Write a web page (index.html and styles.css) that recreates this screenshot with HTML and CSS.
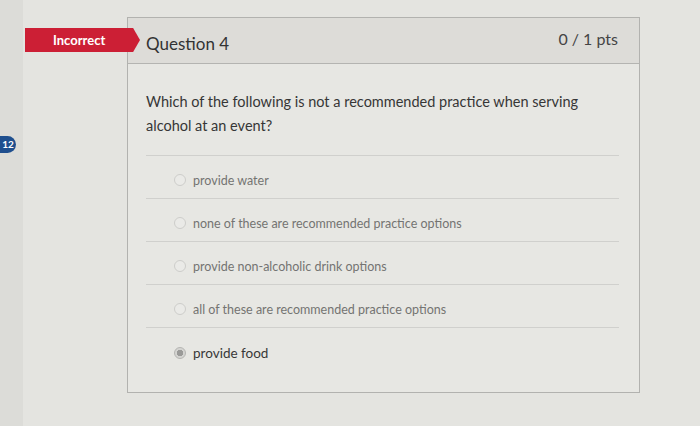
FILE: index.html
```html
<!DOCTYPE html>
<html>
<head>
<meta charset="utf-8">
<link rel="stylesheet" href="styles.css">
</head>
<body>
<div class="page">
  <div class="rail">
    <span class="qnum">12</span>
  </div>
  <div class="main">
    <div class="card">
      <div class="badge">Incorrect</div>
      <div class="card-header">
        <span class="qtitle">Question 4</span>
        <span class="pts">0 / 1 pts</span>
      </div>
      <div class="card-body">
        <div class="qtext-wrap">
          <p class="qtext">Which of the following is not a recommended practice when serving alcohol at an event?</p>
        </div>
        <ul class="answers">
          <li class="answer"><span class="radio"></span><span class="label">provide water</span></li>
          <li class="answer"><span class="radio"></span><span class="label">none of these are recommended practice options</span></li>
          <li class="answer"><span class="radio"></span><span class="label">provide non-alcoholic drink options</span></li>
          <li class="answer"><span class="radio"></span><span class="label">all of these are recommended practice options</span></li>
          <li class="answer selected"><span class="radio"></span><span class="label">provide food</span></li>
        </ul>
      </div>
    </div>
  </div>
</div>
</body>
</html>
```

FILE: styles.css
```css
* { box-sizing: border-box; }
html, body {
  margin: 0;
  padding: 0;
  background: #e4e4e0;
  font-family: Lato, "Open Sans", sans-serif;
  color: #3a3a3a;
  width: 700px;
  height: 426px;
  overflow: hidden;
}
.page {
  display: flex;
  height: 426px;
}
.rail {
  width: 23px;
  flex: none;
  background: #dcdcd8;
  position: relative;
}
.qnum {
  position: absolute;
  left: 0;
  top: 136px;
  width: 16px;
  height: 17px;
  border-radius: 0 9px 9px 0;
  background: #1f4f8e;
  color: #fff;
  font-size: 10px;
  font-weight: 700;
  line-height: 17px;
  text-align: center;
}
.main {
  flex: 1;
  padding: 17px 0 0 104px;
}
.card {
  position: relative;
  width: 513px;
  height: 376px;
  border: 1px solid #b2b2af;
  background: #e7e7e3;
}
.badge {
  position: absolute;
  left: -103px;
  top: 10px;
  width: 115px;
  height: 24px;
  background: #cc1f35;
  color: #fff;
  font-size: 13px;
  font-weight: 700;
  line-height: 24px;
  padding-left: 28px;
  clip-path: polygon(0 0, 94% 0, 100% 50%, 94% 100%, 0 100%);
}
.card-header {
  height: 46px;
  background: #dddcd8;
  border-bottom: 1px solid #b4b4b1;
  display: flex;
  justify-content: space-between;
  align-items: center;
  padding: 0 21px 0 18px;
}
.qtitle {
  font-size: 17px;
  color: #333;
  padding-top: 5px;
}
.pts {
  font-size: 16px;
  color: #444;
  padding-bottom: 4px;
}
.card-body {
  padding: 26px 20px 0 18px;
}
.qtext-wrap {
  padding-bottom: 17px;
  border-bottom: 1px solid #d0d0cd;
}
.qtext {
  margin: 0;
  font-size: 14.5px;
  line-height: 24px;
  color: #363636;
  width: 440px;
}
.answers {
  list-style: none;
  margin: 0;
  padding: 0;
}
.answer {
  display: flex;
  align-items: center;
  gap: 7px;
  height: 43px;
  padding: 6px 0 0 28px;
  border-bottom: 1px solid #d0d0cd;
  font-size: 12.5px;
  color: #747472;
}
.answer:last-child {
  border-bottom: none;
}
.radio {
  width: 12px;
  height: 12px;
  border-radius: 50%;
  border: 1px solid #cdcdca;
  background: #eaeae7;
  flex: none;
}
.selected {
  color: #383838;
  font-size: 13.5px;
}
.selected .radio {
  border: 1px solid #b5b5b2;
  background: radial-gradient(circle, #9a9a98 0 3px, #d4d4d1 3.5px);
}
```
